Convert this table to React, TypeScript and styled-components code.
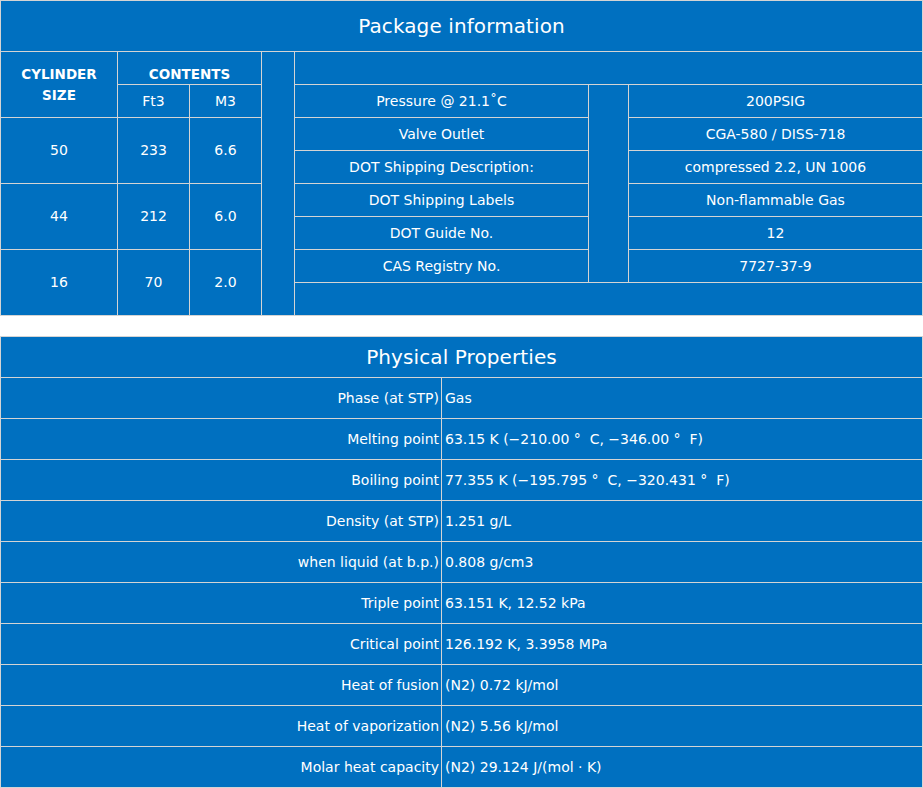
import React from "react";
import styled, { createGlobalStyle, css } from "styled-components";

const GlobalStyle = createGlobalStyle`
    html, body {
        margin: 0;
        padding: 0;
        background: #ffffff;
    }

    body {
        font-family: "DejaVu Sans", "Liberation Sans", sans-serif;
        color: #ffffff;
    }
`;

const BLUE = "#0070c0";
const LINE = "#d4d4d4";

const Page = styled.div`
    width: 923px;
`;

const GridBase = css`
    display: grid;
    gap: 1px;
    padding: 1px;
    background: ${LINE};
    box-sizing: border-box;
    width: 923px;
`;

const PackageGrid = styled.div`
    ${GridBase}
    grid-template-columns: 116px 71px 71px 32px 293px 39px 293px;
    grid-template-rows: 50px repeat(8, 32px);
`;

const PropertyGrid = styled.div`
    ${GridBase}
    margin-top: 20px;
    grid-template-columns: 440px 480px;
    grid-template-rows: repeat(11, 40px);
`;

interface CellProps {
    $col?: string;
    $row?: string;
}

const Cell = styled.div<CellProps>`
    background: ${BLUE};
    grid-column: ${props => props.$col || "auto"};
    grid-row: ${props => props.$row || "auto"};
    display: flex;
    align-items: center;
    justify-content: center;
    text-align: center;
    font-size: 14px;
    line-height: 17px;
    white-space: nowrap;
    min-width: 0;
`;

const TitleCell = styled(Cell)`
    font-size: 20px;
    letter-spacing: 0.1px;
`;

const HeadCell = styled(Cell)<{ $low?: boolean }>`
    font-weight: bold;
    font-size: 13.5px;
    line-height: ${props => (props.$low ? "17px" : "21px")};
    align-items: ${props => (props.$low ? "flex-end" : "center")};
    padding-bottom: ${props => (props.$low ? "1px" : "0")};
    box-sizing: border-box;
`;

const LabelCell = styled(Cell)`
    justify-content: flex-end;
    text-align: right;
    padding-right: 2px;
`;

const ValueCell = styled(Cell)`
    justify-content: flex-start;
    text-align: left;
    padding-left: 3px;
`;

const cylinders = [
    { size: "50", ft3: "233", m3: "6.6" },
    { size: "44", ft3: "212", m3: "6.0" },
    { size: "16", ft3: "70", m3: "2.0" },
];

const packageRows = [
    ["Pressure @ 21.1˚C", "200PSIG"],
    ["Valve Outlet", "CGA-580 / DISS-718"],
    ["DOT Shipping Description:", "compressed 2.2, UN 1006"],
    ["DOT Shipping Labels", "Non-flammable Gas"],
    ["DOT Guide No.", "12"],
    ["CAS Registry No.", "7727-37-9"],
];

const properties = [
    ["Phase (at STP)", "Gas"],
    ["Melting point", "63.15 K (−210.00 °\u00a0 C, −346.00 °\u00a0 F)"],
    ["Boiling point", "77.355 K (−195.795 °\u00a0 C, −320.431 °\u00a0 F)"],
    ["Density (at STP)", "1.251 g/L"],
    ["when liquid (at b.p.)", "0.808 g/cm3"],
    ["Triple point", "63.151 K, 12.52 kPa"],
    ["Critical point", "126.192 K, 3.3958 MPa"],
    ["Heat of fusion", "(N2) 0.72 kJ/mol"],
    ["Heat of vaporization", "(N2) 5.56 kJ/mol"],
    ["Molar heat capacity", "(N2) 29.124 J/(mol · K)"],
];

const PackageTable = () => (
    <PackageGrid>
        <TitleCell $col="1 / -1" $row="1">Package information</TitleCell>

        <HeadCell $col="1" $row="2 / 4">
            CYLINDER
            <br />
            SIZE
        </HeadCell>
        <HeadCell $col="2 / 4" $row="2" $low>CONTENTS</HeadCell>
        <Cell $col="2" $row="3">Ft3</Cell>
        <Cell $col="3" $row="3">M3</Cell>

        {cylinders.map((c, i) => {
            const rows = `${4 + i * 2} / ${6 + i * 2}`;
            return (
                <React.Fragment key={c.size}>
                    <Cell $col="1" $row={rows}>{c.size}</Cell>
                    <Cell $col="2" $row={rows}>{c.ft3}</Cell>
                    <Cell $col="3" $row={rows}>{c.m3}</Cell>
                </React.Fragment>
            );
        })}

        <Cell $col="4" $row="2 / 10" />
        <Cell $col="5 / 8" $row="2" />
        <Cell $col="6" $row="3 / 9" />
        {packageRows.map(([label, value], i) => (
            <React.Fragment key={label}>
                <Cell $col="5" $row={`${3 + i}`}>{label}</Cell>
                <Cell $col="7" $row={`${3 + i}`}>{value}</Cell>
            </React.Fragment>
        ))}
        <Cell $col="5 / 8" $row="9" />
    </PackageGrid>
);

const PropertyTable = () => (
    <PropertyGrid>
        <TitleCell $col="1 / -1">Physical Properties</TitleCell>
        {properties.map(([label, value]) => (
            <React.Fragment key={label}>
                <LabelCell>{label}</LabelCell>
                <ValueCell>{value}</ValueCell>
            </React.Fragment>
        ))}
    </PropertyGrid>
);

export default function App() {
    return (
        <>
            <GlobalStyle />
            <Page>
                <PackageTable />
                <PropertyTable />
            </Page>
        </>
    );
}
